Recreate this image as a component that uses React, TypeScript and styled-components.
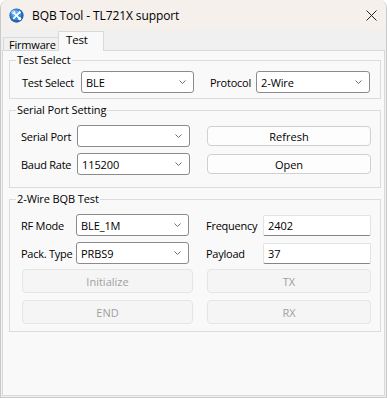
import React from "react";
import styled, { createGlobalStyle } from "styled-components";

const Global = createGlobalStyle`
  html, body { margin: 0; padding: 0; background: #ffffff; }
  body { font-family: "Open Sans", "Noto Sans", Arial, sans-serif; }
  * { box-sizing: border-box; }
`;

const Window = styled.div`
  width: 387px;
  height: 398px;
  display: flex;
  flex-direction: column;
  background: #f0f0f0;
  border: 1px solid #c9c9c9;
  border-top: none;
  border-radius: 8px 8px 0 0;
  overflow: hidden;
  font-size: 11px;
  color: #000;
`;

const TitleBar = styled.div`
  height: 30px;
  flex: 0 0 30px;
  display: flex;
  align-items: center;
  background: #f5f0eb;
  padding: 0 9px 0 8px;
`;

const Title = styled.span`
  font-size: 12px;
  margin-left: 8px;
  flex: 1;
  letter-spacing: -0.1px;
`;

const TabStrip = styled.div`
  height: 20px;
  flex: 0 0 20px;
  display: flex;
  align-items: flex-end;
  padding-left: 2px;
`;

const Tab = styled.div<{ $active?: boolean }>`
  position: relative;
  z-index: ${(p) => (p.$active ? 1 : 0)};
  height: ${(p) => (p.$active ? 20 : 13)}px;
  width: ${(p) => (p.$active ? 46 : 56)}px;
  margin-left: ${(p) => (p.$active ? -1 : 0)}px;
  margin-bottom: ${(p) => (p.$active ? -1 : 0)}px;
  background: ${(p) => (p.$active ? "#f9f9f9" : "#f0f0f0")};
  border: 1px solid #d9d9d9;
  border-bottom: none;
  font-size: ${(p) => (p.$active ? 11.5 : 11)}px;
  line-height: ${(p) => (p.$active ? 16 : 13)}px;
  padding-left: ${(p) => (p.$active ? 7 : 5)}px;
  letter-spacing: -0.2px;
`;

const Body = styled.div`
  flex: 1;
  display: flex;
  padding: 0 1px 1px 1px;
`;

const Panel = styled.div`
  flex: 1;
  background: #f9f9f9;
  border: 1px solid #d9d9d9;
  padding: 9px 0 0 6px;
  display: flex;
  flex-direction: column;
  gap: 11px;
`;

const Group = styled.div<{ $pt: number; $pb: number; $gap: number }>`
  position: relative;
  width: 372px;
  border: 1px solid #dcdcdc;
  padding: ${(p) => p.$pt}px 0 ${(p) => p.$pb}px 0;
  display: flex;
  flex-direction: column;
  gap: ${(p) => p.$gap}px;
`;

const Legend = styled.span`
  position: absolute;
  top: -8px;
  left: 6px;
  background: #f9f9f9;
  padding: 0 1px;
  line-height: 14px;
  font-size: 11px;
  letter-spacing: -0.1px;
`;

const Row = styled.div<{ $pl: number; $h?: number; $mt?: number }>`
  display: flex;
  align-items: center;
  height: ${(p) => p.$h ?? 22}px;
  padding-left: ${(p) => p.$pl}px;
  margin-top: ${(p) => p.$mt ?? 0}px;
`;

const Label = styled.span<{ $w: number; $ml?: number }>`
  width: ${(p) => p.$w}px;
  margin-left: ${(p) => p.$ml ?? 0}px;
  flex: 0 0 auto;
  white-space: nowrap;
  font-size: 11px;
  letter-spacing: -0.25px;
`;

const ComboBox = styled.div<{ $w: number }>`
  width: ${(p) => p.$w}px;
  height: 22px;
  flex: 0 0 auto;
  display: flex;
  align-items: center;
  justify-content: space-between;
  background: #ffffff;
  border: 1px solid #8b8b8b;
  border-radius: 3px;
  padding: 0 7px 0 4px;
  font-size: 11px;
  letter-spacing: -0.1px;
`;

const Chevron = styled.svg`
  width: 7px;
  height: 4px;
  flex: 0 0 auto;
`;

const TextInput = styled.div<{ $w: number }>`
  width: ${(p) => p.$w}px;
  height: 21px;
  flex: 0 0 auto;
  display: flex;
  align-items: center;
  background: #ffffff;
  border: 1px solid #e3e3e3;
  border-bottom: 1px solid #858585;
  border-radius: 2px;
  padding-left: 4px;
  font-size: 11px;
`;

const Button = styled.div<{ $w: number; $h: number; $ml?: number; $disabled?: boolean }>`
  width: ${(p) => p.$w}px;
  height: ${(p) => p.$h}px;
  margin-left: ${(p) => p.$ml ?? 0}px;
  flex: 0 0 auto;
  display: flex;
  align-items: center;
  justify-content: center;
  border-radius: 4px;
  font-size: 11px;
  background: ${(p) => (p.$disabled ? "#f5f5f5" : "#fdfdfd")};
  border: 1px solid ${(p) => (p.$disabled ? "#e5e5e5" : "#d0d0d0")};
  color: ${(p) => (p.$disabled ? "#a0a0a0" : "#000")};
`;

const Combo = ({ w, value }: { w: number; value: string }) => (
  <ComboBox $w={w}>
    <span>{value}</span>
    <Chevron viewBox="0 0 7 4">
      <path d="M0.5 0.5 L3.5 3.5 L6.5 0.5" fill="none" stroke="#5f5f5f" strokeWidth="0.9" />
    </Chevron>
  </ComboBox>
);

const AppIcon = () => (
  <svg width="15" height="15" viewBox="0 0 16 16">
    <circle cx="8" cy="8" r="7.6" fill="#1d63b8" />
    <circle cx="7.4" cy="7" r="6" fill="#3d8ee0" />
    <circle cx="6.8" cy="5.8" r="3.5" fill="#64aef0" />
    <g stroke="#ffffff" strokeLinecap="round">
      <path d="M5 5 L11 11" strokeWidth="1.8" />
      <path d="M11 5 L5 11" strokeWidth="1.8" />
    </g>
    <circle cx="4.6" cy="4.6" r="1.9" fill="#ffffff" />
    <circle cx="4.2" cy="4.2" r="0.8" fill="#3d8ee0" />
    <circle cx="11.4" cy="11.4" r="1.7" fill="#ffffff" />
    <rect x="10.2" y="3.5" width="2.4" height="2.4" fill="#ffffff" transform="rotate(45 11.4 4.7)" />
  </svg>
);

const CloseIcon = () => (
  <svg width="11" height="11" viewBox="0 0 11 11">
    <path d="M0.5 0.5 L10.5 10.5 M10.5 0.5 L0.5 10.5" stroke="#222" strokeWidth="1" />
  </svg>
);

export default function App() {
  return (
    <>
      <Global />
      <Window>
        <TitleBar>
          <AppIcon />
          <Title>BQB Tool - TL721X support</Title>
          <CloseIcon />
        </TitleBar>
        <TabStrip>
          <Tab>Firmware</Tab>
          <Tab $active>Test</Tab>
        </TabStrip>
        <Body>
          <Panel>
            <Group $pt={10} $pb={5} $gap={0}>
              <Legend>Test Select</Legend>
              <Row $pl={12}>
                <Label $w={59}>Test Select</Label>
                <Combo w={113} value="BLE" />
                <Label $w={46} $ml={16}>Protocol</Label>
                <Combo w={114} value="2-Wire" />
              </Row>
            </Group>

            <Group $pt={14} $pb={12} $gap={6}>
              <Legend>Serial Port Setting</Legend>
              <Row $pl={11}>
                <Label $w={56}>Serial Port</Label>
                <Combo w={113} value="" />
                <Button $w={164} $h={20} $ml={17}>Refresh</Button>
              </Row>
              <Row $pl={11}>
                <Label $w={56}>Baud Rate</Label>
                <Combo w={113} value="115200" />
                <Button $w={164} $h={20} $ml={17}>Open</Button>
              </Row>
            </Group>

            <Group $pt={14} $pb={7} $gap={0}>
              <Legend>2-Wire BQB Test</Legend>
              <Row $pl={11}>
                <Label $w={55}>RF Mode</Label>
                <Combo w={113} value="BLE_1M" />
                <Label $w={57} $ml={17}>Frequency</Label>
                <TextInput $w={108}>2402</TextInput>
              </Row>
              <Row $pl={11} $mt={6}>
                <Label $w={55}>Pack. Type</Label>
                <Combo w={113} value="PRBS9" />
                <Label $w={57} $ml={17}>Payload</Label>
                <TextInput $w={108}>37</TextInput>
              </Row>
              <Row $pl={12} $h={24} $mt={5}>
                <Button $w={171} $h={24} $disabled>Initialize</Button>
                <Button $w={164} $h={24} $ml={14} $disabled>TX</Button>
              </Row>
              <Row $pl={12} $h={24} $mt={7}>
                <Button $w={171} $h={24} $disabled>END</Button>
                <Button $w={164} $h={24} $ml={14} $disabled>RX</Button>
              </Row>
            </Group>
          </Panel>
        </Body>
      </Window>
    </>
  );
}
